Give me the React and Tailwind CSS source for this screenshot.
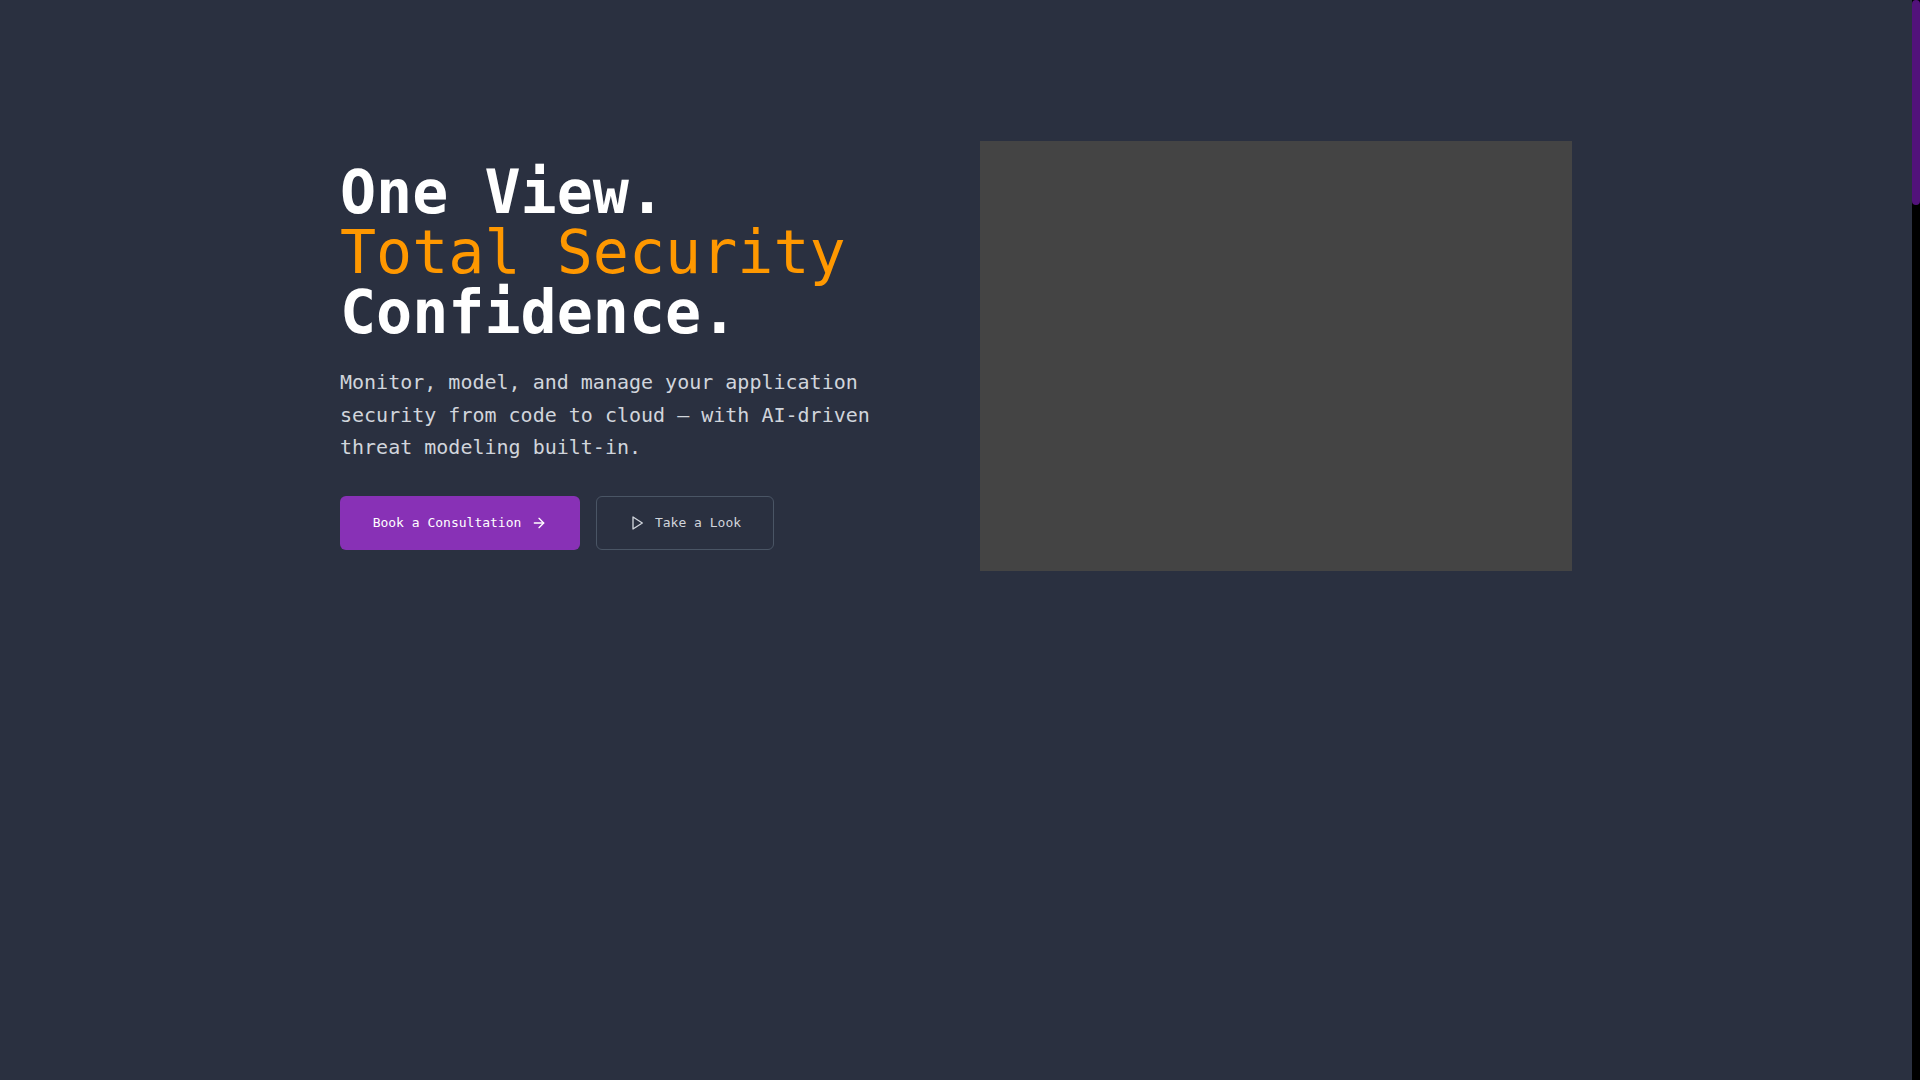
import { ArrowRight } from "lucide-react";

function PlayOutline() {
  return (
    <svg
      className="size-4"
      viewBox="0 0 24 24"
      fill="none"
      stroke="currentColor"
      strokeWidth="2"
      strokeLinecap="round"
      strokeLinejoin="round"
      aria-hidden="true"
    >
      <polygon points="6 3 20 12 6 21 6 3" />
    </svg>
  );
}

function Hero() {
  return (
    <section className="mx-auto grid w-full max-w-[1280px] grid-cols-1 items-center gap-12 px-6 pt-[141px] pb-16 lg:grid-cols-2">
      <div>
        <h1 className="mb-6 text-6xl leading-none font-bold text-white">
          <span className="block">One View.</span>
          <span className="block font-normal text-[#ff9800]">Total Security</span>
          <span className="block">Confidence.</span>
        </h1>
        <p className="mb-8 text-xl leading-relaxed text-gray-300">
          Monitor, model, and manage your application security from code to cloud — with AI-driven threat modeling
          built-in.
        </p>
        <div className="flex flex-wrap gap-4 text-[13px]">
          <button
            type="button"
            className="flex h-[54px] w-60 items-center justify-center gap-2.5 rounded-md bg-[#8831b6] text-white"
          >
            Book a Consultation
            <ArrowRight className="size-4" aria-hidden="true" />
          </button>
          <button
            type="button"
            className="flex h-[54px] w-[178px] items-center justify-center gap-2.5 rounded-md border border-gray-600 text-gray-300"
          >
            <PlayOutline />
            Take a Look
          </button>
        </div>
      </div>
      <div className="h-[430px] bg-[#444444]" />
    </section>
  );
}

function ScrollTrack() {
  return (
    <div className="w-2 shrink-0 bg-black" aria-hidden="true">
      <div className="h-[205px] rounded-full bg-[#52127a]" />
    </div>
  );
}

export default function App() {
  return (
    <div className="flex min-h-screen bg-[#2a3040] font-['DejaVu_Sans_Mono',monospace]">
      <main className="min-w-0 flex-1">
        <Hero />
      </main>
      <ScrollTrack />
    </div>
  );
}
